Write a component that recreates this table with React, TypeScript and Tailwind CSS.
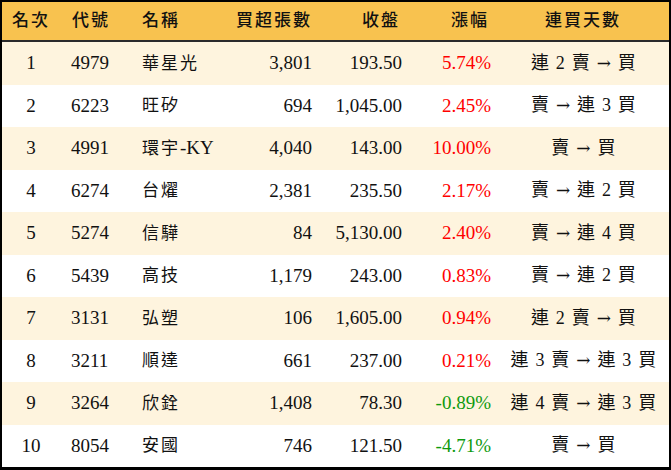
const rows = [
  { rank: 1, code: '4979', name: '華星光', net: '3,801', close: '193.50', chg: '5.74%', up: true, days: '連 2 賣 → 買' },
  { rank: 2, code: '6223', name: '旺矽', net: '694', close: '1,045.00', chg: '2.45%', up: true, days: '賣 → 連 3 買' },
  { rank: 3, code: '4991', name: '環宇-KY', net: '4,040', close: '143.00', chg: '10.00%', up: true, days: '賣 → 買' },
  { rank: 4, code: '6274', name: '台燿', net: '2,381', close: '235.50', chg: '2.17%', up: true, days: '賣 → 連 2 買' },
  { rank: 5, code: '5274', name: '信驊', net: '84', close: '5,130.00', chg: '2.40%', up: true, days: '賣 → 連 4 買' },
  { rank: 6, code: '5439', name: '高技', net: '1,179', close: '243.00', chg: '0.83%', up: true, days: '賣 → 連 2 買' },
  { rank: 7, code: '3131', name: '弘塑', net: '106', close: '1,605.00', chg: '0.94%', up: true, days: '連 2 賣 → 買' },
  { rank: 8, code: '3211', name: '順達', net: '661', close: '237.00', chg: '0.21%', up: true, days: '連 3 賣 → 連 3 買' },
  { rank: 9, code: '3264', name: '欣銓', net: '1,408', close: '78.30', chg: '-0.89%', up: false, days: '連 4 賣 → 連 3 買' },
  { rank: 10, code: '8054', name: '安國', net: '746', close: '121.50', chg: '-4.71%', up: false, days: '賣 → 買' },
];

const font = "font-['Liberation_Serif','Noto_Sans_CJK_TC',serif]";

// the arrow glyph is wider in DejaVu Serif, closer to the original
function Days({ text }: { text: string }) {
  const parts = text.split('→');
  return (
    <>
      {parts.map((p, i) => (
        <span key={i}>
          {i > 0 && <span className="font-['DejaVu_Serif'] text-[17px]">→</span>}
          {p}
        </span>
      ))}
    </>
  );
}

function Name({ text }: { text: string }) {
  const idx = text.indexOf('-');
  if (idx < 0) return <span className="tracking-[2px]">{text}</span>;
  return (
    <>
      <span className="tracking-[2px]">{text.slice(0, idx)}</span>
      <span className="text-[19px]">{text.slice(idx)}</span>
    </>
  );
}

export default function App() {
  return (
    <div className={`w-[671px] h-[470px] border-2 border-b-[3px] border-black bg-white text-[19px] text-[#111] ${font}`}>
      {/* header */}
      <div className="flex h-[40px] items-center bg-[#f8c24f] border-b-2 border-[#2a2a2a] text-[17px] font-medium tracking-[2px]">
        <div className="w-[58px] text-center">名次</div>
        <div className="w-[75px] pl-[12px]">代號</div>
        <div className="w-[85px] pl-[7px]">名稱</div>
        <div className="w-[92px] text-right -mr-[2px]">買超張數</div>
        <div className="w-[90px] text-right">收盤</div>
        <div className="w-[97px] text-right pr-[8px]">漲幅</div>
        <div className="flex-1 text-center">連買天數</div>
      </div>
      {rows.map((r, i) => (
        <div
          key={r.rank}
          className={`flex h-[42.5px] items-center ${i % 2 === 0 ? 'bg-[#fef4de]' : 'bg-white'}`}
        >
          <div className="w-[58px] text-center">{r.rank}</div>
          <div className="w-[75px] pl-[11px]">{r.code}</div>
          <div className="w-[85px] pl-[7px] text-[17px] whitespace-nowrap">
            <Name text={r.name} />
          </div>
          <div className="w-[92px] text-right">{r.net}</div>
          <div className="w-[90px] text-right">{r.close}</div>
          <div className={`w-[97px] text-right pr-[8px] ${r.up ? 'text-[#ff0000]' : 'text-[#0e9a0e]'}`}>{r.chg}</div>
          <div className="flex-1 text-center text-[18px] tracking-[1.2px] whitespace-pre">
            <Days text={r.days} />
          </div>
        </div>
      ))}
    </div>
  );
}
